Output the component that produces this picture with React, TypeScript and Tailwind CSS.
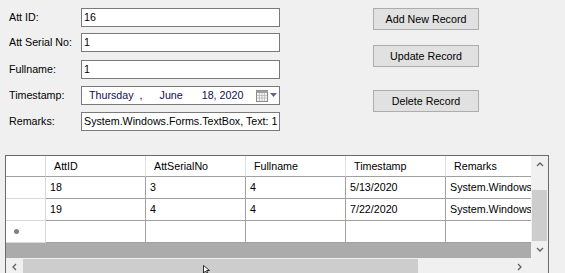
import React from "react";

const labels = ["Att ID:", "Att Serial No:", "Fullname:", "Timestamp:", "Remarks:"];
const cols = ["AttID", "AttSerialNo", "Fullname", "Timestamp", "Remarks"];
const rows = [
  ["18", "3", "4", "5/13/2020", "System.Windows.Forms.TextBox, Text: 1"],
  ["19", "4", "4", "7/22/2020", "System.Windows.Forms.TextBox, Text: 1"],
];

function Chevron({ dir }: { dir: "up" | "down" | "left" | "right" }) {
  const d = {
    up: "M1 5 L4 2 L7 5",
    down: "M1 2 L4 5 L7 2",
    left: "M5 1 L2 4 L5 7",
    right: "M2 1 L5 4 L2 7",
  }[dir];
  return (
    <svg width="8" height="8" viewBox="0 0 8 8">
      <path d={d} fill="none" stroke="#606060" strokeWidth="1.3" />
    </svg>
  );
}

function TextBox({ value }: { value: string }) {
  return (
    <div className="h-[19px] w-[199px] border border-[#7a7a7a] bg-white pl-[2px] leading-[17px] whitespace-nowrap overflow-hidden">
      {value}
    </div>
  );
}

function DateBox() {
  return (
    <div className="h-[19px] w-[199px] border border-[#7a7a7a] bg-white flex items-center leading-[17px] whitespace-nowrap text-[#10104a]">
      <span className="ml-[7px]">Thursday</span>
      <span className="ml-[6px]">,</span>
      <span className="ml-[17px]">June</span>
      <span className="ml-[19px]">18, 2020</span>
      <svg className="ml-[13px]" width="12" height="12" viewBox="0 0 12 12">
        <rect x="0.5" y="0.5" width="11" height="11" fill="#f4f4f4" stroke="#8a8a8a" />
        <rect x="0.5" y="0.5" width="11" height="2.5" fill="#a0a0a0" />
        <path d="M3.5 3 V11 M6 3 V11 M8.5 3 V11 M1 5.5 H11 M1 8 H11" stroke="#b8b8b8" strokeWidth="0.8" />
      </svg>
      <svg className="ml-[2px]" width="7" height="5" viewBox="0 0 7 5">
        <path d="M0 0 H7 L3.5 4 Z" fill="#5a6a80" />
      </svg>
    </div>
  );
}

function Btn({ children }: { children: React.ReactNode }) {
  return (
    <div className="h-[22px] w-[106px] border border-[#adadad] bg-[#e1e1e1] flex items-center justify-center">
      {children}
    </div>
  );
}

export default function App() {
  return (
    <div
      className="h-[273px] w-[565px] overflow-hidden bg-[#f0f0f0] text-[10.7px] text-black relative"
      style={{ fontFamily: '"Liberation Sans", Arial, sans-serif' }}
    >
      <div className="flex pt-[8px]">
        {/* form fields */}
        <div className="flex flex-col">
          {labels.map((l, i) => (
            <div
              key={l}
              className={`flex items-center ${i === 0 ? "" : i === 1 ? "mt-[6px]" : i === 2 ? "mt-[8px]" : "mt-[7px]"}`}
            >
              <div className="w-[81px] pl-[9px] leading-[19px]">{l}</div>
              {i === 3 ? (
                <DateBox />
              ) : (
                <TextBox value={["16", "1", "1", "", "System.Windows.Forms.TextBox, Text: 1"][i]} />
              )}
            </div>
          ))}
        </div>
        {/* buttons */}
        <div className="ml-[93px] flex flex-col">
          <Btn>Add New Record</Btn>
          <div className="mt-[15px]">
            <Btn>Update Record</Btn>
          </div>
          <div className="mt-[23px]">
            <Btn>Delete Record</Btn>
          </div>
        </div>
      </div>

      {/* data grid */}
      <div className="absolute left-[5px] top-[155px] w-[544px] h-[130px] border border-[#6b6b6b] bg-[#ababab] flex">
        <div className="w-[525px] flex flex-col overflow-hidden">
          <div className="h-[102px] shrink-0 overflow-hidden">
            <div className="flex w-max bg-white">
              <div className="w-[40px] h-[21px] border-r border-b border-[#d9d9d9] border-b-[#a0a0a0]" />
              {cols.map((c, i) => (
                <div
                  key={c}
                  className={`w-[100px] h-[21px] border-b border-[#a0a0a0] pl-[8px] leading-[20px] ${i < 4 ? "border-r border-r-[#e0e0e0]" : ""}`}
                >
                  {c}
                </div>
              ))}
            </div>
            {[...rows, null].map((r, ri) => (
              <div key={ri} className="flex w-max bg-white">
                <div className="w-[40px] h-[22px] border-r border-b border-[#d9d9d9] flex items-center pl-[8px]">
                  {r === null && <div className="w-[5px] h-[5px] rounded-full bg-[#808080]" />}
                </div>
                {cols.map((c, ci) => (
                  <div
                    key={c}
                    className="w-[100px] h-[22px] border-r border-b border-[#a0a0a0] pl-[4px] leading-[21px] whitespace-nowrap overflow-hidden"
                  >
                    {r ? r[ci] : ""}
                  </div>
                ))}
              </div>
            ))}
          </div>
          {/* horizontal scrollbar */}
          <div className="h-[17px] shrink-0 bg-[#f0f0f0] flex items-center">
            <div className="w-[17px] flex justify-center">
              <Chevron dir="left" />
            </div>
            <div className="w-[395px] h-[15px] bg-[#cdcdcd]" />
            <div className="flex-1" />
            <div className="w-[17px] flex justify-center mr-[3px]">
              <Chevron dir="right" />
            </div>
          </div>
        </div>
        {/* vertical scrollbar */}
        <div className="w-[17px] flex flex-col bg-[#f0f0f0]">
          <div className="h-[102px] flex flex-col items-center">
            <div className="h-[17px] flex items-center">
              <Chevron dir="up" />
            </div>
            <div className="mt-[17px] w-[15px] h-[51px] bg-[#cdcdcd]" />
            <div className="h-[17px] flex items-center">
              <Chevron dir="down" />
            </div>
          </div>
        </div>
      </div>

      {/* mouse cursor */}
      <svg className="absolute left-[203px] top-[265px]" width="8" height="10" viewBox="0 0 8 10">
        <path d="M0.5 0.5 V8 L2.5 6 L4 9 L5 8.5 L3.7 5.5 H6.5 Z" fill="#fff" stroke="#000" strokeWidth="0.8" />
      </svg>
    </div>
  );
}
